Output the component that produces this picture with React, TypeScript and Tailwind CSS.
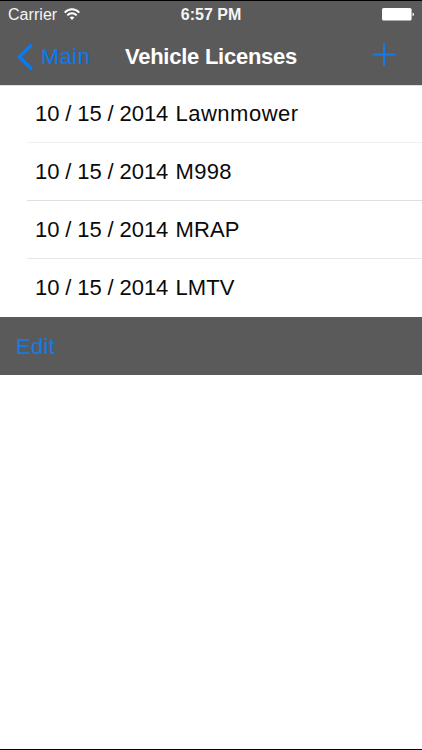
const licenses = [
  { date: '10 / 15 / 2014', name: 'Lawnmower', spacing: 'tracking-[0.5px]', divider: 'border-[#f1f1f1]' },
  { date: '10 / 15 / 2014', name: 'M998', spacing: 'tracking-[0.35px]', divider: 'border-[#dfdfdf]' },
  { date: '10 / 15 / 2014', name: 'MRAP', spacing: 'tracking-[0.1px]', divider: 'border-[#e8e8e8]' },
  { date: '10 / 15 / 2014', name: 'LMTV', spacing: 'tracking-[0.1px]', divider: 'border-transparent' },
];

function WifiIcon() {
  return (
    <svg className="mb-px w-4 h-3" viewBox="0 0 16 12" fill="none" stroke="white" strokeWidth="2">
      <path d="M0.7 4.6 C4.8 0.1 11.2 0.1 15.3 4.6" />
      <path d="M3.3 7.4 C6 4.6 10 4.6 12.7 7.4" />
      <path d="M5.7 9.6 C7 8.2 9 8.2 10.3 9.6 L8 12 Z" fill="white" stroke="none" />
    </svg>
  );
}

function BatteryIcon() {
  return (
    <svg className="w-8 h-[13px]" viewBox="0 0 32 13" fill="white">
      <rect width="29.6" height="12.6" rx="1.6" />
      <path d="M30.6 4.4 Q32 4.8 32 6.3 Q32 7.8 30.6 8.2 Z" />
    </svg>
  );
}

function StatusBar() {
  return (
    <div className="grid grid-cols-3 h-[27px] items-center text-base leading-[27px] text-[#f5f5f5]">
      <div className="flex items-center gap-[7px] pl-2">
        <span className="tracking-[0.05px]">Carrier</span>
        <WifiIcon />
      </div>
      <span className="text-center font-bold">6:57 PM</span>
      <div className="flex justify-end pr-2">
        <BatteryIcon />
      </div>
    </div>
  );
}

export default function App() {
  return (
    <div className="flex h-[750px] w-[422px] flex-col overflow-hidden border-y border-black bg-white font-['Liberation_Sans',Arial,sans-serif]">
      <header className="h-[84px] shrink-0 bg-[#5a5a5a]">
        <StatusBar />
        <nav className="grid h-[57px] grid-cols-[120px_1fr_120px] items-center text-[22px] leading-[57px]">
          <button className="flex items-center gap-[7px] pl-[17px] text-[#077bf7]">
            <svg className="h-[28px] w-[17px]" viewBox="0 0 17 28" fill="none" stroke="currentColor" strokeWidth="3.4">
              <path d="M14.8 1.6 L2.4 14 L14.8 26.4" />
            </svg>
            <span className="tracking-[0.4px]">Main</span>
          </button>
          <h1 className="whitespace-nowrap text-center font-bold tracking-[-0.25px] text-white">Vehicle Licenses</h1>
          <button className="flex justify-end pr-[26px] pb-[3px] text-[#137be9]">
            <svg className="h-6 w-6" viewBox="0 0 24 24" fill="none" stroke="currentColor" strokeWidth="2">
              <path d="M12 0 V23 M0.5 11.5 H23.5" />
            </svg>
          </button>
        </nav>
      </header>

      <ul className="h-[232px] shrink-0 border-t border-[#dedede] text-[22px] text-[#0a0a0a]">
        {licenses.map((license, index) => (
          <li
            key={license.name}
            className={`ml-[27px] flex items-center border-b pl-2 ${index === 0 ? 'h-[57px] pb-px' : 'h-[58px]'} ${license.divider}`}
          >
            <span className="w-[140.5px] whitespace-nowrap tracking-[-0.1px]">{license.date}</span>
            <span className={license.spacing}>{license.name}</span>
          </li>
        ))}
      </ul>

      <footer className="flex h-[58px] shrink-0 items-center bg-[#5a5a5a] pl-4 text-[22px] text-[#137be9]">
        <button className="tracking-[0.3px]">Edit</button>
      </footer>
    </div>
  );
}
